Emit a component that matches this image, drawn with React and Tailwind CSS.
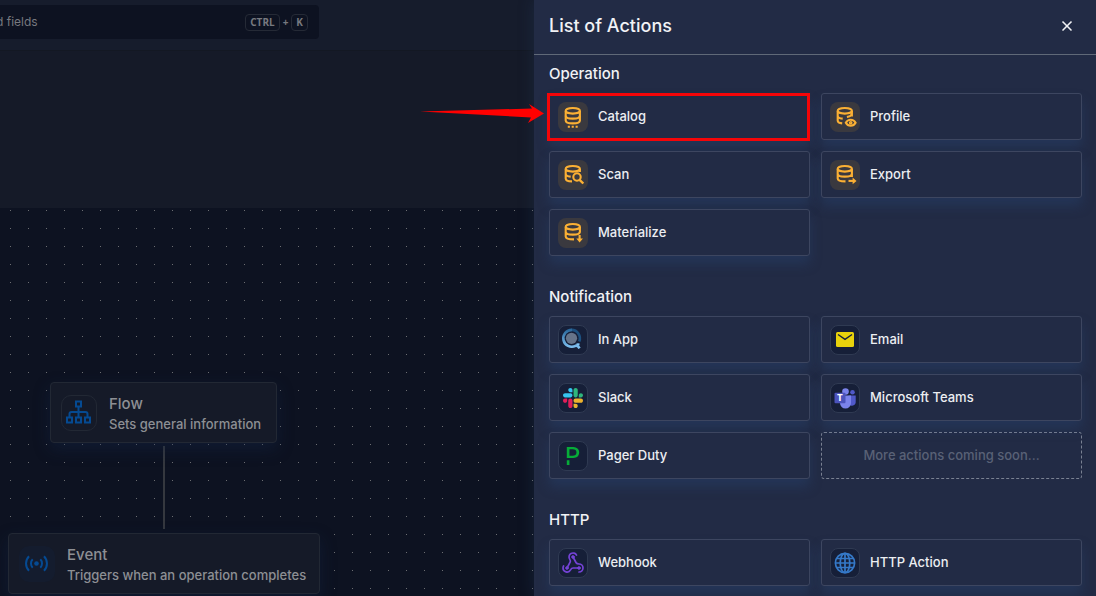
import React from "react";
import { SiPagerduty } from "react-icons/si";
import { X } from "lucide-react";

function DbIcon({ kind }) {
  const full = kind === "catalog";
  return (
    <svg viewBox="0 0 30 30" className="size-full" fill="none" stroke="#fbb034" strokeWidth="2.1">
      <ellipse cx="14.800" cy="8.800" rx="7.100" ry="2.800" />
      {full && (
        <>
          <path d="M7.700 9v9.500c0 1.700 3.100 2.900 7.100 2.900s7.100-1.200 7.100-2.900V9" />
          <path d="M7.700 13.700c0 1.700 3.100 2.900 7.100 2.900s7.100-1.200 7.100-2.900" />
          <path d="M9.800 24.800h2.100m1.800 0h2.100m1.800 0h2.100" strokeWidth="2" />
        </>
      )}
      {kind === "scan" && (
        <>
          <path d="M7.700 9v9.500c0 1.700 2.800 2.900 6.300 2.900M7.700 13.700c0 1.500 2.200 2.700 5 2.900M21.900 9v3" />
          <circle cx="19" cy="17" r="3.700" />
          <path d="M21.600 19.800l3.700 3.700" strokeWidth="2.400" />
        </>
      )}
      {kind === "profile" && (
        <>
          <path d="M7.700 9v9.500c0 1.500 1.800 2.600 4.500 2.900M7.700 13.700c0 1.500 2.200 2.700 5 2.900M21.900 9v5.500M21.900 12c-.6 1.600-2.200 2.600-5 3" />
          <path d="M15.800 20.800c2.200-4 7.600-4 9.800 0c-2.200 4-7.600 4-9.800 0z" />
          <circle cx="20.700" cy="20.800" r=".8" />
        </>
      )}
      {kind === "export" && (
        <>
          <path d="M7.700 9v9.500c0 1.700 3.100 2.900 7.800 2.900M7.700 13.700c0 1.700 3.100 2.900 7.100 2.900s7.100-1.200 7.100-2.900M21.900 9v8" />
          <path d="M18.500 20.900h6" />
          <path d="M22.600 17.600l3.900 3.300-3.900 3.300z" fill="#fbb034" stroke="none" />
        </>
      )}
      {kind === "materialize" && (
        <>
          <path d="M7.700 9v9.500c0 1.700 3.100 2.900 8.300 2.900M7.700 13.700c0 1.700 3.100 2.900 7.100 2.900s7.100-1.200 7.100-2.900M21.900 9v5.500" />
          <path d="M21.600 17v5" />
          <path d="M18.300 20.500h6.600l-3.300 3.900z" fill="#fbb034" stroke="none" />
        </>
      )}
    </svg>
  );
}

function InAppIcon() {
  return (
    <svg viewBox="0 0 28 28" className="size-full" fill="none">
      <defs>
        <linearGradient id="ringLight" x1="0" y1="0" x2="0" y2="1">
          <stop offset="0" stopColor="#2c6a9d" />
          <stop offset="1" stopColor="#82c4f5" />
        </linearGradient>
      </defs>
      <circle cx="12.500" cy="12.300" r="5.600" fill="#66748a" />
      <path d="M12.500 3.900a8.400 8.400 0 0 1 7.700 11.700" stroke="#1d5180" strokeWidth="2.600" />
      <path d="M13 3.900a8.400 8.400 0 1 0 3.500 15.900c1.700-.5 2.700.1 4 2.600" stroke="url(#ringLight)" strokeWidth="2.600" />
      <path d="M17.500 18.300h3" stroke="#82c4f5" strokeWidth="2" />
    </svg>
  );
}

function SlackIcon() {
  return (
    <svg viewBox="0 0 122.800 122.800" className="size-5">
      <path fill="#e01e5a" d="M25.800 77.600c0 7.100-5.800 12.900-12.900 12.900S0 84.700 0 77.600s5.800-12.900 12.900-12.900h12.900v12.900zm6.500 0c0-7.100 5.800-12.900 12.900-12.900s12.900 5.800 12.900 12.900v32.300c0 7.100-5.800 12.900-12.900 12.900s-12.900-5.800-12.900-12.900V77.600z" />
      <path fill="#36c5f0" d="M45.200 25.800c-7.100 0-12.900-5.800-12.900-12.900S38.100 0 45.200 0s12.900 5.800 12.900 12.900v12.900H45.200zm0 6.500c7.100 0 12.900 5.800 12.900 12.900s-5.800 12.900-12.900 12.900H12.900C5.800 58.100 0 52.300 0 45.200s5.800-12.900 12.900-12.900h32.300z" />
      <path fill="#2eb67d" d="M97 45.200c0-7.100 5.800-12.900 12.900-12.900s12.900 5.800 12.900 12.900-5.800 12.900-12.900 12.900H97V45.200zm-6.500 0c0 7.100-5.800 12.900-12.900 12.900s-12.900-5.800-12.900-12.900V12.900C64.700 5.800 70.500 0 77.600 0s12.900 5.800 12.900 12.900v32.300z" />
      <path fill="#ecb22e" d="M77.600 97c7.100 0 12.900 5.800 12.900 12.900s-5.800 12.900-12.900 12.900-12.900-5.800-12.900-12.900V97h12.900zm0-6.500c-7.100 0-12.900-5.800-12.900-12.900s5.800-12.900 12.900-12.900h32.300c7.100 0 12.900 5.800 12.900 12.900s-5.800 12.900-12.900 12.900H77.600z" />
    </svg>
  );
}

function EmailIcon() {
  return (
    <svg viewBox="0 0 28 28" className="size-full">
      <rect x="5" y="6" width="18" height="15" rx="1.500" fill="#e8d20c" />
      <path d="M7 8.500l7 4.800 7-4.800" fill="none" stroke="#16203a" strokeWidth="1.400" />
    </svg>
  );
}

function TeamsIcon() {
  return (
    <svg viewBox="0 0 28 28" className="size-full">
      <circle cx="21.500" cy="8.300" r="2.300" fill="#5059c9" />
      <path d="M17.500 11.500h7.200v6a3.800 3.800 0 0 1-7.200 2z" fill="#5059c9" />
      <circle cx="14.500" cy="7.500" r="3.300" fill="#7b83eb" />
      <path d="M9 11.500h11v7.500a5.500 5.500 0 0 1-11 0z" fill="#7b83eb" />
      <rect x="3.500" y="8.700" width="11" height="10.500" rx="1" fill="#4b53bc" />
      <text x="9" y="17" textAnchor="middle" fontSize="8.500" fontWeight="800" fill="#ffffff" fontFamily="Inter, sans-serif">T</text>
    </svg>
  );
}

function WebhookIcon() {
  return (
    <svg viewBox="0 0 24 24" className="size-6" fill="none" stroke="#7443d6" strokeWidth="1.700" strokeLinecap="round">
      <path d="M18 16.980h-5.990c-1.100 0-1.950.940-2.480 1.900A4 4 0 0 1 2 17c.010-.700.200-1.400.570-2" />
      <path d="m6 17 3.130-5.780c.530-.970.100-2.180-.500-3.100a4 4 0 1 1 6.890-4.060" />
      <path d="m12 6 3.130 5.730C15.660 12.700 16.900 13 18 13a4 4 0 0 1 0 8" />
      <g fill="#7443d6" strokeWidth="1">
        <circle cx="12" cy="6" r="1.300" />
        <circle cx="6" cy="17" r="1.300" />
        <circle cx="18" cy="17" r="1.300" />
      </g>
    </svg>
  );
}

function GlobeIcon() {
  return (
    <svg viewBox="0 0 28 28" className="size-full" fill="none" stroke="#3579c8" strokeWidth="1.700">
      <circle cx="14" cy="14" r="9.600" />
      <ellipse cx="14" cy="14" rx="4.800" ry="9.600" />
      <path d="M14 4.400v19.200M4.400 14h19.200M6 9.500h16M6 18.500h16" />
    </svg>
  );
}

function FlowIcon() {
  return (
    <svg viewBox="0 0 34 34" className="size-full" fill="none" stroke="#054a92" strokeWidth="2">
      <rect x="14" y="5.500" width="5" height="5" />
      <rect x="5" y="21.500" width="5" height="5" />
      <rect x="14" y="21.500" width="5" height="5" />
      <rect x="23" y="21.500" width="5" height="5" />
      <path d="M16.500 10.500v11M7.500 21.500v-3.500q0-2 2-2h14q2 0 2 2v3.500" />
    </svg>
  );
}

function EventIcon() {
  return (
    <svg viewBox="0 0 36 36" className="size-full" fill="none" stroke="#054a92" strokeWidth="2">
      <circle cx="17.500" cy="17.500" r="2.300" fill="#054a92" stroke="none" />
      <path d="M13.700 13.300a6 6 0 0 0 0 8.400M21.300 13.300a6 6 0 0 1 0 8.400M10 10.200a10.500 10.500 0 0 0 0 14.600M25 10.200a10.500 10.500 0 0 1 0 14.600" />
    </svg>
  );
}

const SECTIONS = [
  {
    title: "Operation",
    amber: true,
    items: [
      { name: "Catalog", icon: <DbIcon kind="catalog" />, marked: true },
      { name: "Profile", icon: <DbIcon kind="profile" /> },
      { name: "Scan", icon: <DbIcon kind="scan" /> },
      { name: "Export", icon: <DbIcon kind="export" /> },
      { name: "Materialize", icon: <DbIcon kind="materialize" /> },
    ],
  },
  {
    title: "Notification",
    more: true,
    items: [
      { name: "In App", icon: <InAppIcon /> },
      { name: "Email", icon: <EmailIcon /> },
      { name: "Slack", icon: <SlackIcon /> },
      { name: "Microsoft Teams", icon: <TeamsIcon /> },
      { name: "Pager Duty", icon: <SiPagerduty className="size-[18px] text-[#06ac38]" /> },
    ],
  },
  {
    title: "HTTP",
    items: [
      { name: "Webhook", icon: <WebhookIcon /> },
      { name: "HTTP Action", icon: <GlobeIcon /> },
    ],
  },
];

function Pointer() {
  return (
    <span className="pointer-events-none absolute -top-px -right-px -bottom-0.5 -left-[3px] border-3 border-[#f50508]">
      <svg viewBox="0 0 124 20" className="absolute top-2 -left-[130px] h-5 w-[124px]" fill="#ff0000">
        <path d="M0 7.500L112 4.500L109 0L124 9.500L108 19L111 13.500Z" />
      </svg>
    </span>
  );
}

function ActionCard({ item, amber }) {
  return (
    <button
      type="button"
      className="relative flex h-[47px] items-center gap-2.5 rounded-[3px] border border-[#3d4660] bg-[#222b45] px-2 text-left text-[13px] font-medium text-[#eceef2] shadow-[0_8px_12px_rgba(40,72,120,0.35)]"
    >
      <span
        className={
          amber
            ? "flex size-[30px] items-center justify-center rounded-lg bg-[#3a393f]"
            : "flex size-[30px] items-center justify-center rounded-lg border border-[#2f3a52] bg-[#161f38]"
        }
      >
        {item.icon}
      </span>
      {item.name}
      {item.marked && <Pointer />}
    </button>
  );
}

function FlowNode({ title, text, icon, place, tile }) {
  return (
    <div className={`absolute flex h-[61px] items-center gap-3 rounded-[4px] border border-[#222834] bg-[#151a28] px-2.5 whitespace-nowrap text-[#8d8f94] shadow-[0_6px_16px_rgba(20,40,75,0.4)] ${place}`}>
      <div className={`size-9 rounded-[10px] ${tile}`}>{icon}</div>
      <div className="pt-0.5 font-medium">
        <h3 className="text-[15px] leading-5">{title}</h3>
        <p className="text-[13px] leading-5">{text}</p>
      </div>
    </div>
  );
}

export default function App() {
  return (
    <div className="flex h-screen overflow-hidden bg-[#0d1221] font-['Inter',sans-serif]">
      <main className="flex min-w-0 flex-1 flex-col overflow-hidden">
        <header className="h-[208px] shrink-0 bg-[#151a28]">
          <div className="h-[51px] border-b border-[#131823] bg-[#161c2c] pt-[5px]">
            <div className="flex h-[34px] w-[319px] items-center justify-between rounded-r bg-[#0d1221] pr-[11px] text-[#77797f]">
              <input
                aria-label="Search"
                placeholder="d fields"
                className="-ml-1 w-40 bg-transparent text-xs outline-none placeholder:text-[#77797f]"
              />
              <div className="flex items-center gap-[3px] font-['Open_Sans',sans-serif] text-[10px] leading-[15px] font-bold">
                <kbd className="rounded border border-[#252a36] px-1 font-['Open_Sans',sans-serif]">CTRL</kbd>
                <span>+</span>
                <kbd className="rounded border border-[#252a36] px-1 font-['Open_Sans',sans-serif]">K</kbd>
              </div>
            </div>
          </div>
        </header>
        <section className="relative flex-1">
          <svg className="absolute inset-0 size-full" aria-hidden="true">
            <defs>
              <pattern id="dots" width="18" height="18" patternUnits="userSpaceOnUse">
                <rect x="10" y="2" width="1" height="1" fill="#6c6e72" />
              </pattern>
            </defs>
            <rect width="100%" height="100%" fill="url(#dots)" />
          </svg>
          <div className="absolute top-[238px] left-[163px] h-[83px] w-0.5 bg-[#35383f]" />
          <FlowNode
            title="Flow"
            text="Sets general information"
            icon={<FlowIcon />}
            place="top-[174px] left-[50px] w-[227px]"
            tile="border border-[#222834]"
          />
          <FlowNode
            title="Event"
            text="Triggers when an operation completes"
            icon={<EventIcon />}
            place="top-[325px] left-2 w-[312px]"
            tile="bg-[#141c2e]"
          />
        </section>
      </main>
      <aside className="z-10 flex w-[562px] shrink-0 flex-col bg-[#222b45] text-[#f1f2f5] shadow-[0_0_14px_rgba(38,62,100,0.35)]">
        <div className="flex h-[55px] shrink-0 items-center justify-between border-b border-[#606978] pr-[21px] pb-0.5 pl-[15px]">
          <h1 className="text-lg font-medium">List of Actions</h1>
          <button type="button" aria-label="Close">
            <X className="size-4" strokeWidth={2.5} />
          </button>
        </div>
        <div className="flex flex-col gap-[29px] pt-[7px] pr-3.5 pl-[15px]">
          {SECTIONS.map((section) => (
            <section key={section.title} className="flex flex-col gap-[7px]">
              <h2 className="text-[15px] leading-6 font-medium">{section.title}</h2>
              <div className="grid grid-cols-2 gap-[11px]">
                {section.items.map((item) => (
                  <ActionCard key={item.name} item={item} amber={section.amber} />
                ))}
                {section.more && (
                  <div className="flex h-[47px] items-center justify-center rounded-[3px] border border-dashed border-[#7a8192] text-[13px] font-medium text-[#596176]">
                    More actions coming soon...
                  </div>
                )}
              </div>
            </section>
          ))}
        </div>
      </aside>
    </div>
  );
}
